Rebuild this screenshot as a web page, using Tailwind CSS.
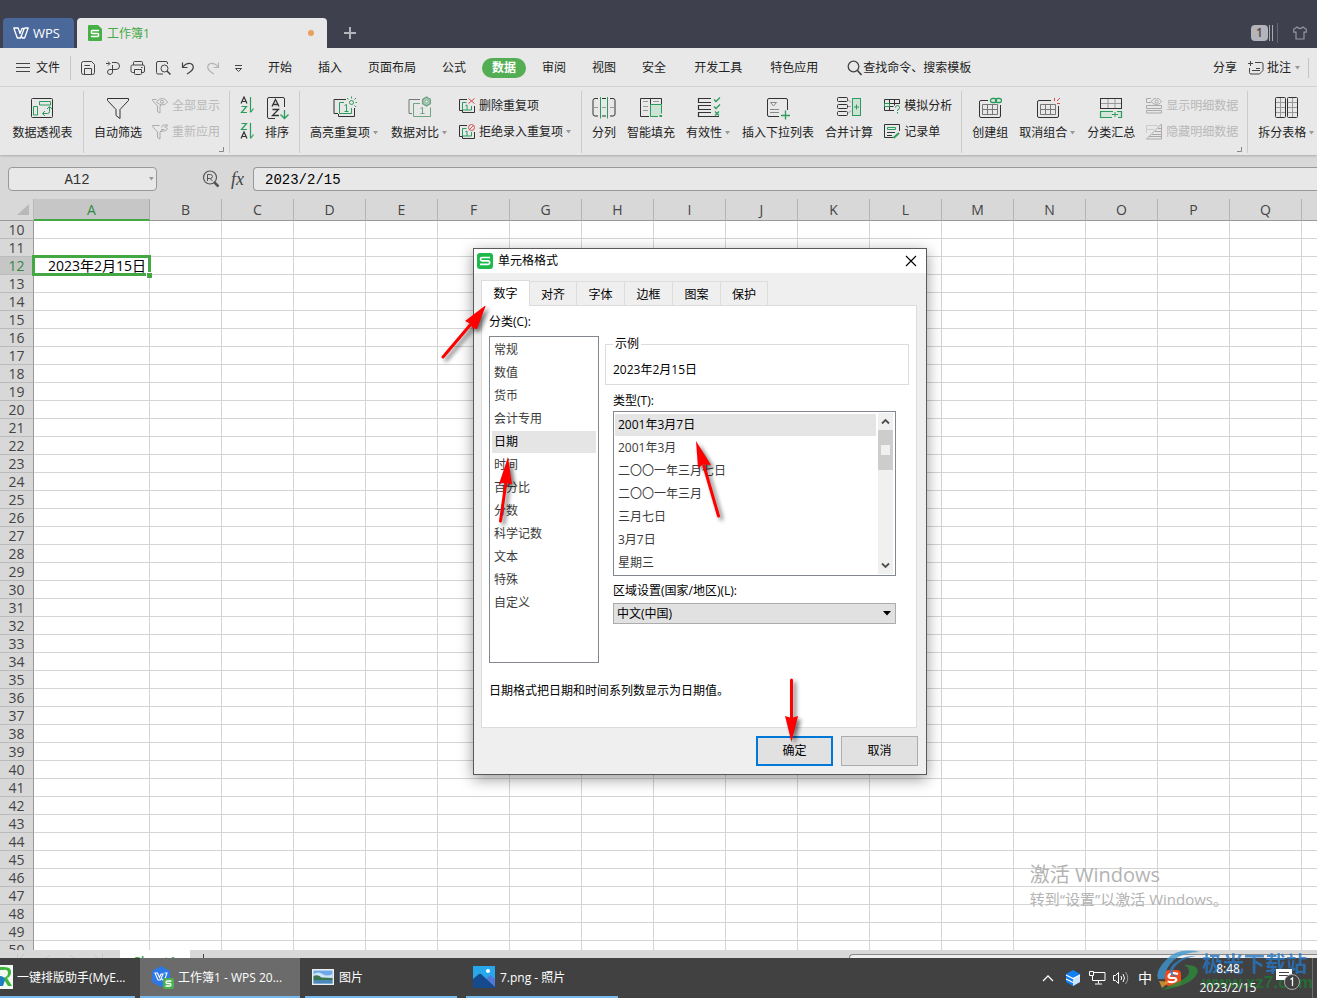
<!DOCTYPE html>
<html lang="zh-CN">
<head>
<meta charset="utf-8">
<meta name="viewport" content="width=device-width, initial-scale=1">
<title>工作簿1 - WPS</title>
<script src="https://cdn.jsdelivr.net/npm/@tailwindcss/browser@4"></script>
</head>
<body class="relative flex h-screen flex-col overflow-hidden bg-[#d8d8d8] font-['Open_Sans','Noto_Sans_CJK_SC',sans-serif] text-xs leading-4 text-[#222]">

<!-- Title bar -->
<header class="flex h-12 shrink-0 items-end bg-[#3e414d] pl-[3px]">
  <button class="flex h-[30px] w-[71px] items-center gap-1 rounded-t bg-[#4a6899] pl-[10px] text-[13px] text-white">
    <svg width="16" height="12" viewBox="0 0 16 12" fill="none" stroke="#fff" stroke-width="1.300" stroke-linejoin="round"><path d="M.8 1h4.400l1.800 5.500L9 1.500h2.200L7.500 11H4.300zM11.500 1h3.700l-3.600 10H9.200L8 8"/></svg>
    <span>WPS</span>
  </button>
  <div class="ml-[3px] flex h-[30px] w-[250px] items-center rounded-t bg-[#e8e8e8] pl-[11px]">
    <svg width="14" height="16" viewBox="0 0 14 16"><path d="M1 0h9l4 4v11a1 1 0 0 1-1 1H1a1 1 0 0 1-1-1V1a1 1 0 0 1 1-1z" fill="#45b045"/><path d="M11 5.500H4.500Q3.300 5.500 3.300 7T4.500 8.500h5q1.200 0 1.200 1.500t-1.200 1.500H3" fill="none" stroke="#fff" stroke-width="1.500"/></svg>
    <span class="ml-[5px] grow pt-px text-[#45a945]">工作簿1</span>
    <span class="mr-[13px] h-[6px] w-[6px] rounded-full bg-[#e8a05c]"></span>
  </div>
  <button class="flex h-[30px] w-[46px] items-center justify-center" aria-label="新建标签"><svg width="12" height="12" viewBox="0 0 12 12" stroke="#b4b5ba" stroke-width="2"><path d="M6 0v12M0 6h12"/></svg></button>
  <div class="ml-auto flex h-[30px] items-center pr-[10px]">
    <span class="flex h-4 w-[17px] items-center justify-center rounded-sm bg-[#b4b5bb] text-xs font-semibold text-[#5d4a3a]">1</span>
    <svg class="ml-px" width="10" height="20" viewBox="0 0 10 20" stroke="#a9abb2"><path d="M0.500 2v16M3.500 2v16"/><path d="M8.500 0v20" stroke="#63666f"/></svg>
    <svg class="ml-[14px]" width="14" height="14" viewBox="0 0 14 14" fill="none" stroke="#9496a0" stroke-width="1.200"><path d="M4 1Q7 4 10 1l3.300 2.200v3H11V13H3V6.200H.7v-3z"/></svg>
  </div>
</header>

<!-- Menu bar -->
<nav class="flex h-[39px] shrink-0 items-center border-b border-[#d6d6d6] bg-[#e8e8e8] pt-px pl-4">
  <button class="flex items-center gap-[5px]"><svg width="15" height="11" viewBox="0 0 15 11" stroke="#444"><path d="M0 1.500h14M0 5.500h14M0 9.500h14"/></svg><span>文件</span></button>
  <div class="ml-[10px] h-6 w-px bg-[#c4c4c4]"></div>
  <div class="ml-[9px] flex items-center gap-[9px]">
    <button aria-label="保存"><svg width="16" height="16" viewBox="0 0 16 16" fill="none" stroke="#444"><path d="M1.500 3.500a2 2 0 0 1 2-2h8l3 3v8a2 2 0 0 1-2 2h-9a2 2 0 0 1-2-2zM4.500 14.500v-6h7v6M4.500 5.500h5.500"/></svg></button>
    <button aria-label="输出"><svg width="16" height="16" viewBox="0 0 16 16" fill="none" stroke="#444"><path d="M1 3.500h3.500M3 1.500l2 2-2 2M7 2.500h4a3.500 3.500 0 0 1 0 7H5M7.500 5v7a2.500 2.500 0 1 1-2.500-2.500"/></svg></button>
    <button aria-label="打印"><svg width="16" height="16" viewBox="0 0 16 16" fill="none" stroke="#444"><path d="M3.500 5V2.500q0-1 1-1h7q1 0 1 1V5M4 12.500H2.500q-1.500 0-1.500-1.500V6.500q0-1.500 1.500-1.500h10.500q1.500 0 1.500 1.500V11q0 1.500-1.500 1.500h-1M4.500 9.500h7v4q0 1-1 1h-5q-1 0-1-1zM11 7.500h1.500"/></svg></button>
    <button aria-label="打印预览"><svg width="16" height="16" viewBox="0 0 16 16" fill="none" stroke="#444"><path d="M12.500 4V3q0-1.500-1.500-1.500H3Q1.500 1.500 1.500 3v9.500q0 1.500 1.500 1.500h5"/><circle cx="9.500" cy="8.500" r="3.500"/><path d="M12 11l3.500 3.500" stroke-width="1.500"/></svg></button>
    <button aria-label="撤销"><svg width="16" height="16" viewBox="0 0 16 16" fill="none" stroke="#444" stroke-width="1.200"><path d="M2.500 2.500v5h5M2.800 7Q6 3 9.500 3.300q3.500.4 3.800 3.700 0 3-3.300 5L7 14"/></svg></button>
    <button aria-label="恢复"><svg width="16" height="16" viewBox="0 0 16 16" fill="none" stroke="#b4b4b4" stroke-width="1.200"><path d="M13.500 2.500v5h-5M13.200 7Q10 3 6.500 3.300 3 3.700 2.700 7q0 3 3.300 5L9 14"/></svg></button>
    <button class="pl-px" aria-label="更多"><svg width="16" height="16" viewBox="0 0 16 16" fill="none" stroke="#444"><path d="M4 5.500h7M4.500 8.500h6L7.500 11.500z"/></svg></button>
  </div>
  <div class="ml-2 flex items-center whitespace-nowrap">
    <button class="px-[13px]">开始</button>
    <button class="px-[13px]">插入</button>
    <button class="px-[13px]">页面布局</button>
    <button class="pr-[10px] pl-[13px]">公式</button>
    <button class="mx-[6px] h-5 w-11 rounded-full bg-[#53ae53] font-bold text-white">数据</button>
    <button class="pr-[13px] pl-[10px]">审阅</button>
    <button class="px-[13px]">视图</button>
    <button class="pr-[14px] pl-[13px]">安全</button>
    <button class="px-[14px]">开发工具</button>
    <button class="px-[14px]">特色应用</button>
  </div>
  <button class="ml-[15px] flex items-center whitespace-nowrap"><svg width="16" height="16" viewBox="0 0 16 16" fill="none" stroke="#444" stroke-width="1.300"><circle cx="6.500" cy="6.500" r="5.300"/><path d="M10.500 10.500l4 4.500" stroke-width="1.700"/></svg><span>查找命令、搜索模板</span></button>
  <button class="ml-auto whitespace-nowrap">分享</button>
  <button class="ml-[11px] flex items-center gap-[3px] whitespace-nowrap">
    <svg width="16" height="16" viewBox="0 0 16 16" fill="none" stroke="#444"><path d="M0 3.500h5M2.500 1v5M7 2.500h6.500q1.500 0 1.500 1.500v6.500L11.500 14H3q-1.500 0-1.500-1.500V8M8 8.500h4M4 10.500h8"/></svg>
    <span>批注</span><svg width="7" height="4" viewBox="0 0 7 4" fill="#999"><path d="M1 0h5L3.500 3.500z"/></svg>
  </button>
  <div class="mr-2 ml-[7px] h-5 w-px bg-[#c4c4c4]"></div>
</nav>

<!-- Ribbon -->
<section class="flex h-[68px] shrink-0 items-start overflow-hidden bg-[#e8e8e8] pt-1 whitespace-nowrap shadow-[0_1px_2px_#aaa]" aria-label="数据">
  <div class="flex h-[62px] w-[84px] shrink-0 justify-center border-r border-[#ccc] pl-[2px]">
    <button class="flex h-[50px] flex-col items-center gap-[5px] pt-[5px]">
      <svg width="24" height="24" viewBox="0 0 24 24" fill="none" stroke="#333"><rect x="1.500" y="2.500" width="21" height="19" rx="1"/><g stroke="#2a9d5a"><path d="M9.500 5.500h11v3.500h-11zM3.500 10.500h4v8.500h-4zM19.500 11v4.500q0 2-2 2h-5M17 13l2.500-2.500 2.500 2.500M15 15l-2.500 2.500L15 20"/></g></svg>
      <span>数据透视表</span>
    </button>
  </div>
  <div class="relative flex h-[62px] w-[146px] shrink-0 border-r border-[#ccc] pl-[10px]">
    <button class="flex h-[50px] flex-col items-center gap-[5px] pt-[5px]">
      <svg width="24" height="24" viewBox="0 0 24 24" fill="none" stroke="#333"><path d="M1.500 2.500h21v2l-8.500 9v9l-4-3v-6l-8.500-9z"/></svg>
      <span>自动筛选</span>
    </button>
    <div class="ml-[10px] flex flex-col gap-[10px] pt-[7px] text-[#b8b8b8]">
      <button class="flex items-center gap-1"><svg width="16" height="16" viewBox="0 0 16 16" fill="none" stroke="#aaa"><path d="M4.500 1.500h-4v1L5.500 8v5.500l2.500 1.500V8l1-1M4.500 4q3-4 6-3.500 3 0 5 3.500-2 3-5 3t-6-3z"/><circle cx="10" cy="3.800" r="1.500"/></svg><span>全部显示</span></button>
      <button class="flex items-center gap-1"><svg width="16" height="16" viewBox="0 0 16 16" fill="none" stroke="#aaa"><path d="M7.500 1.500h-7v1L5.500 8v5.500l2.500 1.500V8l1-1M9.500 3.500q1-3 3-2.500h2M15 0v3h-3M15.500 4q-1 3-3 3h-2.500M9.500 8V5.500h3"/></svg><span>重新应用</span></button>
    </div>
    <svg class="absolute right-[5px] bottom-px" width="5" height="5" viewBox="0 0 5 5" fill="none" stroke="#888"><path d="M4.500 0v4.500H0"/></svg>
  </div>
  <div class="flex h-[62px] w-[70px] shrink-0 border-r border-[#ccc] pl-[10px]">
    <div class="flex flex-col gap-[8px] pt-[5px]">
      <button aria-label="升序"><svg width="14" height="18" viewBox="0 0 14 18" fill="none" stroke="#333" stroke-width="1.200"><path d="M1 7.500L4 1l3 6.500M2 5.500h4"/><path d="M1.500 10.500h5L1.500 16.500H7M10.500 1v15M13.500 12.500L10.500 16.500" stroke="#2a9d5a"/></svg></button>
      <button aria-label="降序"><svg width="14" height="18" viewBox="0 0 14 18" fill="none" stroke="#333" stroke-width="1.200"><path d="M1 16.500L4 10l3 6.500M2 14.500h4"/><path d="M1.500 1.500h5L1.500 7.500H7M10.500 1v15M13.500 12.500L10.500 16.500" stroke="#2a9d5a"/></svg></button>
    </div>
    <button class="ml-[11px] flex h-[50px] flex-col items-center gap-[5px] pt-[5px]">
      <svg width="24" height="24" viewBox="0 0 24 24" fill="none" stroke="#333"><path d="M10 22.500H4q-1.500 0-1.500-1.500V3Q2.500 1.500 4 1.500h14q1.500 0 1.500 1.500v8"/><path d="M7 10.500l3.500-7 3.500 7M8.500 8.500h4.500M7.500 13.500h6l-6 6H14" stroke-width="1.300"/><path d="M19.500 14v8.500M15.500 18.500l4 4 4-4" stroke="#2a9d5a" stroke-width="1.300"/></svg>
      <span>排序</span>
    </button>
  </div>
  <div class="flex h-[62px] shrink-0 gap-3 border-r border-[#ccc] pr-2 pl-[10px]">
    <button class="flex h-[50px] flex-col items-center gap-[5px] pt-[5px]">
      <svg width="24" height="24" viewBox="0 0 24 24" fill="none" stroke="#333"><path d="M13 3.500H1v14h4M21.500 12v8.500H5.500V18"/><path d="M11 6.500H6.500v11h12V12M11.500 9.500l2-1v7M11.500 15.500h4" stroke="#2a9d5a"/><g stroke="#2a9d5a"><circle cx="18.500" cy="6.500" r="2"/><path d="M18.500 .5v2M14 2l1.500 1.500M23 2l-1.500 1.500M22.500 6.500H25M21.500 9.500l1.500 1.500"/></g></svg>
      <span class="flex items-center gap-[2px]">高亮重复项<svg width="7" height="4" viewBox="0 0 7 4" fill="#999"><path d="M1 0h5L3.500 3.500z"/></svg></span>
    </button>
    <button class="flex h-[50px] flex-col items-center gap-[5px] pt-[5px]">
      <svg width="24" height="24" viewBox="0 0 24 24" fill="none" stroke="#777"><path d="M12 3.500H1v14h3"/><path d="M12 7.500H5.500v13h17v-9M12.500 12.500l2-1v6M12.500 17.500h4" stroke="#6fa583"/><path d="M18.500 1.200l3.800 2.200v4.200l-3.800 2.200-3.800-2.200V3.400z" fill="#b7d0c0" stroke="#6fa583" stroke-width="1.500"/><circle cx="18.500" cy="5.500" r="1.500" fill="#fff" stroke="#6fa583"/></svg>
      <span class="flex items-center gap-[2px]">数据对比<svg width="7" height="4" viewBox="0 0 7 4" fill="#999"><path d="M1 0h5L3.500 3.500z"/></svg></span>
    </button>
    <div class="-ml-px flex flex-col items-start gap-[10px] pt-[7px] pr-px">
      <button class="flex items-center gap-1"><svg width="16" height="16" viewBox="0 0 16 16" fill="none" stroke="#333"><path d="M8 1.500H.5v11H3M15.500 8v6.500h-12V12"/><path d="M7.500 4.500h-4v7.500h9V8M6.500 7.500l1.500-.5V12" stroke="#2a9d5a"/><path d="M9.500 .5l6 5M15.500 .5l-6 5" stroke="#d0514f"/></svg><span>删除重复项</span></button>
      <button class="flex items-center gap-1"><svg width="16" height="16" viewBox="0 0 16 16" fill="none" stroke="#333"><path d="M8 1.500H.5v11H3M15.500 8v6.500h-12V12"/><path d="M7.500 4.500h-4v7.500h9V8M6.500 7.500l1.500-.5V12" stroke="#2a9d5a"/><g stroke="#d0514f"><circle cx="12.500" cy="3.500" r="3"/><path d="M10.500 5.500l4-4"/></g></svg><span class="flex items-center gap-[2px]">拒绝录入重复项<svg width="7" height="4" viewBox="0 0 7 4" fill="#999"><path d="M1 0h5L3.500 3.500z"/></svg></span></button>
    </div>
  </div>
  <div class="flex h-[62px] shrink-0 gap-[11px] border-r border-[#ccc] pr-[9px] pl-[10px]">
    <button class="flex h-[50px] flex-col items-center gap-[5px] pt-[5px]">
      <svg width="24" height="24" viewBox="0 0 24 24" fill="none" stroke="#333"><path d="M6 2.500H3q-2 0-2 2V18q0 2 2 2h3M10 2.500h4M10 20h4M18 2.500h3q2 0 2 2V18q0 2-2 2h-3"/><path d="M1 11.500h5M10 11.500h4M18 11.500h5" stroke="#999"/><path d="M8.500 1v21.500M15.500 1v21.500" stroke="#2a9d5a"/></svg>
      <span>分列</span>
    </button>
    <button class="flex h-[50px] flex-col items-center gap-[5px] pt-[5px]">
      <svg width="24" height="24" viewBox="0 0 24 24" fill="none" stroke="#333"><path d="M10 20.500H1.500v-18h21V8M11.500 2.500v18"/><path d="M4 5.500h5M4 10.500h5M4 14.500h5M14 5.500h6" stroke="#999"/><path d="M19 20.500h-7.500v-12h11v9" fill="#cfe2d6" stroke="#2a9d5a"/><path d="M20.500 20h2.500" stroke="#2a9d5a" stroke-width="2"/></svg>
      <span>智能填充</span>
    </button>
    <button class="flex h-[50px] flex-col items-center gap-[5px] pt-[5px]">
      <svg width="24" height="24" viewBox="0 0 24 24" fill="none" stroke="#333"><path d="M14 2.500H1.500v4H14M14 9.500H1.500v4H14M14 16.500H1.500v4H22" stroke-width="1.200"/><path d="M17 3.500l2 2 4-4M17 10.500l2 2 4-4M18 15.500l4 4M22 15.500l-4 4" stroke="#2a9d5a" stroke-width="1.300"/></svg>
      <span class="flex items-center gap-[2px]">有效性<svg width="7" height="4" viewBox="0 0 7 4" fill="#999"><path d="M1 0h5L3.500 3.500z"/></svg></span>
    </button>
    <button class="flex h-[50px] flex-col items-center gap-[5px] pt-[5px]">
      <svg width="24" height="24" viewBox="0 0 24 24" fill="none" stroke="#333"><path d="M13 20.500H3q-1.500 0-1.500-1.500V4Q1.500 2.500 3 2.500h17q1.500 0 1.500 1.500v10"/><path d="M4.500 6.500h6L7.500 10zM4 13.500h9M4 16.500h9" stroke="#888"/><path d="M19.500 14.500v9M15 19.500h9" stroke="#2a9d5a" stroke-width="1.300"/></svg>
      <span>插入下拉列表</span>
    </button>
    <button class="flex h-[50px] flex-col items-center gap-[5px] pt-[5px]">
      <svg width="24" height="24" viewBox="0 0 24 24" fill="none" stroke="#333"><rect x=".5" y="1.500" width="10" height="4" rx="1"/><rect x=".5" y="8.500" width="10" height="4" rx="1"/><rect x=".5" y="15.500" width="10" height="4" rx="1"/><path d="M11 3.500l3 3M11 10.500h3M11 17.500l3-3" stroke="#999"/><rect x="15.500" y="2.500" width="8" height="17" fill="#cfe2d6" stroke="#2a9d5a"/><path d="M19.500 8.500v5M17 11h5" stroke="#2a9d5a"/></svg>
      <span>合并计算</span>
    </button>
    <div class="flex flex-col items-start gap-[10px] pt-[7px]">
      <button class="flex items-center gap-1"><svg width="16" height="16" viewBox="0 0 16 16" fill="none" stroke="#333"><path d="M10 12.500H.5v-11h15V6M.5 5.500h15M.5 8.500h9M5.500 1.500v11M10.500 1.500v6"/><path d="M.5 5.500h5v3h-5zM11.500 9.500q0-2 2-2t2 2-2 2.500v1M13.500 14v1.500" stroke="#2a9d5a"/></svg><span>模拟分析</span></button>
      <button class="flex items-center gap-1"><svg width="16" height="16" viewBox="0 0 16 16" fill="none" stroke="#333"><path d="M9 13.500H.5v-13h15V7M3 8.500h8M3 11.500h5"/><path d="M3.500 3.500h8v2h-8z" stroke="#2a9d5a"/><path d="M9.500 14l5.500-5" stroke="#2a9d5a" stroke-width="2"/></svg><span>记录单</span></button>
    </div>
  </div>
  <div class="relative flex h-[62px] shrink-0 gap-[11px] border-r border-[#ccc] pr-[9px] pl-[10px]">
    <button class="flex h-[50px] flex-col items-center gap-[5px] pt-[5px]">
      <svg width="24" height="24" viewBox="0 0 24 24" fill="none" stroke="#333"><path d="M10 4.500H3q-1.500 0-1.500 1.500v14q0 1.500 1.500 1.500h18q1.500 0 1.500-1.500V9"/><path d="M4.500 8.500h15v10h-15zM4.500 13.500h15M9.500 8.500v10M14.500 8.500v10" stroke="#777"/><g stroke="#2a9d5a" stroke-width="1.300"><rect x="12.500" y="2.500" width="6" height="4" rx="2"/><rect x="17.500" y="2.500" width="6" height="4" rx="2"/></g></svg>
      <span>创建组</span>
    </button>
    <button class="flex h-[50px] flex-col items-center gap-[5px] pt-[5px]">
      <svg width="24" height="24" viewBox="0 0 24 24" fill="none" stroke="#333"><path d="M15 4.500H3q-1.500 0-1.500 1.500v14q0 1.500 1.500 1.500h18q1.500 0 1.500-1.500V10"/><path d="M4.500 8.500h15v10h-15zM4.500 13.500h15M9.500 8.500v10M14.500 8.500v10" stroke="#777"/><path d="M18.500 2v3M24 2l-3 3M21 7.500h3" stroke="#d0514f"/></svg>
      <span class="flex items-center gap-[2px]">取消组合<svg width="7" height="4" viewBox="0 0 7 4" fill="#999"><path d="M1 0h5L3.500 3.500z"/></svg></span>
    </button>
    <button class="flex h-[50px] flex-col items-center gap-[5px] pt-[5px]">
      <svg width="24" height="24" viewBox="0 0 24 24" fill="none" stroke="#333"><path d="M2 7.500h21M9 2.500v10M16 2.500v10" stroke="#999"/><rect x="1.500" y="2.500" width="21" height="10"/><path d="M13 21.500H1.500v-6H14M18 15.500h4.500v6H19" fill="#d5e5da" stroke="#2a9d5a" stroke-width="1.200"/><path d="M16 16v5M13 18.500h6" stroke="#2a9d5a"/></svg>
      <span>分类汇总</span>
    </button>
    <div class="flex flex-col items-start gap-[10px] pt-[7px] text-[#b8b8b8]">
      <button class="flex items-center gap-1"><svg width="16" height="16" viewBox="0 0 16 16" fill="none" stroke="#aaa"><path d="M5 .5H.5v4H5M.5 7.500h15v3H.5zM.5 12.500h15v2.500H.5zM5 3.500Q8 0 10.500 0q3 .5 5 3.500-2 3-5 3T5 3.500z"/><circle cx="10.500" cy="3.500" r="1.500"/></svg><span>显示明细数据</span></button>
      <button class="flex items-center gap-1"><svg width="16" height="16" viewBox="0 0 16 16" fill="none" stroke="#aaa"><path d="M.5 15L15.500 0v15zM6 10.500h9.500M9 7.500h6.500M12 4.500h3M3 12.500h12"/><path d="M.5 9V1.500H12M.5 5.500H8" stroke="#ccc"/></svg><span>隐藏明细数据</span></button>
    </div>
    <svg class="absolute right-[5px] bottom-px" width="5" height="5" viewBox="0 0 5 5" fill="none" stroke="#888"><path d="M4.500 0v4.500H0"/></svg>
  </div>
  <div class="flex h-[62px] shrink-0 pl-[10px]">
    <button class="flex h-[50px] flex-col items-center gap-[5px] pt-[5px]">
      <svg width="24" height="24" viewBox="0 0 24 24" fill="none" stroke="#777"><path d="M5.500 2v19M17.500 2v19M1 6.500h10M1 11.500h10M1 16.500h10M13 6.500h10M13 11.500h10M13 16.500h10" stroke="#999"/><rect x=".5" y="1.500" width="10" height="20" rx="1" stroke="#333"/><rect x="12.500" y="1.500" width="10" height="20" rx="1" stroke="#333"/></svg>
      <span class="flex items-center gap-[2px]">拆分表格<svg width="7" height="4" viewBox="0 0 7 4" fill="#999"><path d="M1 0h5L3.500 3.500z"/></svg></span>
    </button>
  </div>
</section>

<!-- Name box and formula bar -->
<section class="flex h-11 shrink-0 items-center pt-1 pl-2">
  <div class="flex h-6 w-[149px] items-center rounded-[4px] border border-[#999] bg-[#e8e8e8] pr-[2px]">
    <input aria-label="名称框" value="A12" class="w-full min-w-0 bg-transparent pt-[2px] pr-1 text-center font-['Liberation_Mono',monospace] text-sm text-[#333] outline-none">
    <svg width="5" height="4" viewBox="0 0 5 4" fill="#999"><path d="M0 0h5L2.500 3.500z"/></svg>
  </div>
  <button class="ml-[45px]" aria-label="浏览公式结果"><svg width="18" height="18" viewBox="0 0 18 18" fill="none" stroke="#555"><circle cx="8" cy="7.500" r="6.500" stroke-width="1.200"/><path d="M5.500 11V4.500h3q2 .3 2 2t-2 2h-3M8 8.500l2.500 2.500" /><path d="M12 12l4.500 4.500" stroke-width="2.500"/></svg></button>
  <button class="ml-[9px] w-[17px] font-['Liberation_Serif',serif] text-lg leading-5 text-[#444] italic" aria-label="插入函数">fx</button>
  <input aria-label="编辑栏" value="2023/2/15" class="ml-[7px] h-6 min-w-0 grow rounded-l-[4px] border border-r-0 border-[#999] bg-[#e8e8e8] pt-[2px] pl-[11px] font-['Liberation_Mono',monospace] text-sm text-black outline-none">
</section>

<!-- Worksheet -->
<main class="min-h-0 grow overflow-hidden bg-white">
  <table class="w-[1374px] table-fixed border-separate border-spacing-0 text-sm">
    <colgroup id="cols"><col class="w-[34px]"><col class="w-[116px]"></colgroup>
    <thead><tr id="head" class="h-[22px] bg-[#d8d8d8]"><th class="h-[22px] border-r border-b border-r-[#bbb] border-b-[#999] p-0"><svg class="ml-[17px]" width="13" height="12" viewBox="0 0 13 12" fill="#b8b8b8"><path d="M12 0v11H0z"/></svg></th></tr></thead>
    <tbody id="rows"></tbody>
  </table>
</main>

<!-- Sheet tabs -->
<div class="flex h-2 shrink-0 overflow-hidden bg-[#d8d8d8]">
  <svg class="ml-4" width="90" height="8" viewBox="0 0 90 8" fill="none" stroke="#c6c6c6"><path d="M1.500 4v4M8 4L4 8M34 5l-3 3M54 5l3 3M78 5l4 3M86.500 4v4"/></svg>
  <button class="ml-[14px] h-[22px] w-[70px] bg-white text-[13px] font-semibold text-[#43a843]">Sheet1</button>
  <span class="ml-[13px] mt-1 h-4 w-px bg-[#444]"></span>
  <div class="mt-[4px] ml-auto h-4 w-[468px] rounded-tl border-t border-l border-[#888] bg-[#eee]"></div>
</div>

<!-- Taskbar -->
<footer class="flex h-10 shrink-0 bg-[#414141] text-white">
  <button class="flex h-10 w-[135px] items-center gap-[3px] border-b-2 border-[#76b9ed]">
    <svg width="14" height="24" viewBox="0 0 14 24"><path d="M0 0h13v24H0z" fill="#f2f8f2"/><path d="M0 2h4q8 0 7 6-.5 4-4 5l5 8H8L3 13q5-1 5-5T3 5H0z" fill="#3db53d"/><path d="M0 11q4 0 5 4l-2 6H0z" fill="#1b7fc0"/></svg>
    <span class="pt-[2px] whitespace-nowrap">一键排版助手(MyE...</span>
  </button>
  <button class="ml-[5px] flex h-10 w-[160px] items-center gap-1 border-b-2 border-[#76b9ed] bg-[#6b6b6b] pl-[10px]">
    <svg width="24" height="24" viewBox="0 0 24 24"><path d="M11 1l9 5v11l-9 5-9-5V6z" fill="#2d78e8"/><path d="M5 8h2.500l2 4.500 1.500-3.500h2L10.500 15H8zM14.500 8H17l-2.500 7h-2l-.8-1.500" fill="none" stroke="#fff" stroke-width="1.100"/><rect x="13" y="13" width="11" height="11" rx="2" fill="#4cb050"/><path d="M21.500 16h-4q-1.500 0-1.500 1.200t1.500 1.300h2q1.500 0 1.500 1.200T19.500 21h-4" fill="none" stroke="#fff" stroke-width="1.300"/></svg>
    <span class="pt-[2px] whitespace-nowrap">工作簿1 - WPS 20...</span>
  </button>
  <button class="ml-[5px] flex h-10 w-[152px] items-center gap-[5px] border-b-2 border-[#76b9ed] pl-[7px]">
    <svg width="22" height="16" viewBox="0 0 22 16"><path d="M0 0h22v16H0z" fill="#eee"/><path d="M1.500 1.500h19v13h-19z" fill="#6fa8ea"/><path d="M1.500 5q5-3 9 0t10 0v4h-19z" fill="#cfe4f6"/><path d="M1.500 7q4-2 8 1.500l11 .5v2h-19z" fill="#3c7350"/><path d="M1.500 11h19v3.500h-19z" fill="#4a88b8"/></svg>
    <span class="pt-[2px]">图片</span>
  </button>
  <button class="ml-[9px] flex h-10 w-[152px] items-center gap-[5px] border-b-2 border-[#76b9ed] pl-[7px]">
    <svg width="22" height="22" viewBox="0 0 22 22"><path d="M0 0h22v22H0z" fill="#28a8ea"/><path d="M10 16l7-7 5 4v9H10z" fill="#4f78d8"/><path d="M0 13l6-5q1-.7 2 0l14 13v1H0z" fill="#154a8c"/><circle cx="15" cy="5" r="2" fill="#fff"/></svg>
    <span class="pt-[2px]">7.png - 照片</span>
  </button>
  <div class="ml-auto flex items-center">
    <svg width="12" height="8" viewBox="0 0 12 8" fill="none" stroke="#fff" stroke-width="1.300"><path d="M1 7l5-5 5 5"/></svg>
    <svg class="ml-[11px]" width="16" height="18" viewBox="0 0 16 18"><path d="M8 1l7 4v8l-7 4-7-4V5z" fill="#1280f0"/><path d="M8 9.500V17l7-4V5.500z" fill="#cfe5fb"/><path d="M1 6L8 9.500 15 6M1 10l7 3.500" fill="none" stroke="#fff" stroke-width="1.200"/></svg>
    <svg class="ml-2" width="17" height="16" viewBox="0 0 17 16" fill="none" stroke="#fff"><path d="M5 2.500h11v8H3.500V6M.5 1.500h4v4h-4zM9.500 10.500v3M6 14h7"/></svg>
    <svg class="ml-[7px]" width="16" height="16" viewBox="0 0 16 16" fill="none" stroke="#fff"><path d="M.5 5.500h2l3-3v11l-3-3h-2zM8 6q1.500 2 0 4M10 4q3 4 0 8"/><path d="M12.500 2q4.500 6 0 12" stroke="#999"/></svg>
    <span class="ml-[9px] w-[14px] text-sm">中</span>
    <svg class="ml-[12px]" width="18" height="18" viewBox="0 0 18 18"><rect x="1" y="1" width="16" height="16" rx="4" fill="#ee4a1c"/><path d="M14 5Q8 3 5.500 5.500t1 3.500h4q3 1 1 3t-8 .500" fill="none" stroke="#fff" stroke-width="2.200"/></svg>
    <div class="relative z-10 ml-[12px] w-[68px] text-center leading-[19px]"><div>8:48</div><div>2023/2/15</div></div>
    <svg class="relative z-10 ml-[14px]" width="26" height="26" viewBox="0 0 26 26"><path d="M0 4h16v11h-4v4l-4-4H0z" fill="#fff"/><path d="M3 7.500h10M3 10.500h10" stroke="#414141"/><circle cx="16" cy="17" r="7.500" fill="#414141" stroke="#aaa"/><path d="M14.500 14.500l2-1.500v8" fill="none" stroke="#fff" stroke-width="1.300"/></svg>
    <span class="mr-[4px] ml-[10px] h-10 w-px bg-[#707070]"></span>
  </div>
</footer>

<!-- Activation notice -->
<div class="absolute right-[89px] bottom-[89px] whitespace-nowrap text-[#b3b3b3]">
  <p class="text-xl leading-7">激活 Windows</p>
  <p class="text-[15px] leading-5">转到“设置”以激活 Windows。</p>
</div>

<!-- Format cells dialog -->
<section role="dialog" aria-label="单元格格式" class="absolute top-[248px] left-[473px] flex h-[527px] w-[454px] flex-col border border-[#5a5a5a] bg-[#efefef] text-black shadow-[0_4px_14px_rgba(0,0,0,0.4)]">
  <div class="flex h-6 items-center bg-white pl-[3px]">
    <svg width="16" height="16" viewBox="0 0 16 16"><rect width="16" height="16" rx="3" fill="#1db94a"/><path d="M13 4.500H5Q3.500 4.500 3.500 6T5 7.800h6.200q1.500 0 1.500 1.700t-1.500 1.800H3" fill="none" stroke="#fff" stroke-width="1.700"/></svg>
    <span class="ml-[5px] grow">单元格格式</span>
    <button class="mr-[9px]" aria-label="关闭"><svg width="12" height="12" viewBox="0 0 12 12" stroke="#000" stroke-width="1.100"><path d="M1 1l10 10M11 1L1 11"/></svg></button>
  </div>
  <div class="z-10 mt-[7px] -mb-px ml-[7px] flex items-end" role="tablist">
    <button role="tab" class="h-[26px] w-[49px] border border-b-0 border-[#dcdcdc] bg-white">数字</button>
    <button role="tab" class="h-[25px] w-[47px] border border-l-0 border-[#dcdcdc] pt-[2px]">对齐</button>
    <button role="tab" class="h-[25px] w-12 border border-l-0 border-[#dcdcdc] pt-[2px]">字体</button>
    <button role="tab" class="h-[25px] w-12 border border-l-0 border-[#dcdcdc] pt-[2px]">边框</button>
    <button role="tab" class="h-[25px] w-12 border border-l-0 border-[#dcdcdc] pt-[2px]">图案</button>
    <button role="tab" class="h-[25px] w-[47px] border border-l-0 border-[#dcdcdc] pt-[2px]">保护</button>
  </div>
  <div class="mr-[9px] ml-[7px] flex h-[423px] flex-col border border-[#dcdcdc] bg-white px-[7px] pt-2">
    <div class="flex">
      <div class="w-[110px]">
        <p id="cat">分类(C):</p>
        <ul role="listbox" aria-labelledby="cat" class="mt-[6px] flex h-[327px] flex-col gap-px border border-[#828790] px-[2px] pt-[2px] leading-[22px] text-[#3a3a3a]">
          <li class="pl-[2px]">常规</li><li class="pl-[2px]">数值</li><li class="pl-[2px]">货币</li><li class="pl-[2px]">会计专用</li>
          <li class="bg-[#e5e5e5] pl-[2px] text-black">日期</li>
          <li class="pl-[2px]">时间</li><li class="pl-[2px]">百分比</li><li class="pl-[2px]">分数</li><li class="pl-[2px]">科学记数</li><li class="pl-[2px]">文本</li><li class="pl-[2px]">特殊</li><li class="pl-[2px]">自定义</li>
        </ul>
      </div>
      <div class="ml-[6px] w-[304px] pt-[22px]">
        <fieldset class="h-[49px] border border-[#dcdcdc] pb-2 pl-[7px]"><legend class="px-[2px]">示例</legend><p class="pt-[10px]">2023年2月15日</p></fieldset>
        <div class="mt-[8px] ml-2 w-[283px]">
          <p id="type">类型(T):</p>
          <div class="mt-[2px] flex h-[165px] overflow-hidden border border-[#828790]">
            <ul role="listbox" aria-labelledby="type" class="flex grow flex-col gap-px pt-[2px] pl-px leading-[22px] text-[#3a3a3a]">
              <li class="bg-[#e5e5e5] pl-[3px] text-black">2001年3月7日</li><li class="pl-[3px]">2001年3月</li><li class="pl-[3px]">二〇〇一年三月七日</li><li class="pl-[3px]">二〇〇一年三月</li><li class="pl-[3px]">三月七日</li><li class="pl-[3px]">3月7日</li><li class="pl-[3px]">星期三</li>
            </ul>
            <div class="mt-px mr-[2px] mb-px ml-[2px] flex w-[15px] flex-col items-center bg-[#f0f0f0]">
              <svg class="mt-[5px]" width="9" height="7" viewBox="0 0 9 7" fill="none" stroke="#505050" stroke-width="1.800"><path d="M1 5.500l3.500-3.500L8 5.500"/></svg>
              <div class="mt-[5px] flex h-10 w-full items-center justify-center bg-[#cdcdcd]"><span class="h-[10px] w-[9px] bg-[#f0f0f0]"></span></div>
              <svg class="mt-auto mb-[5px]" width="9" height="7" viewBox="0 0 9 7" fill="none" stroke="#505050" stroke-width="1.800"><path d="M1 1.500L4.500 5 8 1.500"/></svg>
            </div>
          </div>
          <label for="locale" class="mt-[7px] block">区域设置(国家/地区)(L):</label>
          <div class="relative mt-1 flex">
            <select id="locale" class="h-[21px] w-full appearance-none border border-[#acacac] bg-[#e1e1e1] pl-[3px] leading-[19px]"><option>中文(中国)</option></select>
            <svg class="absolute top-2 right-[5px]" width="8" height="5" viewBox="0 0 8 5"><path d="M0 0h8L4 4.500z"/></svg>
          </div>
        </div>
      </div>
    </div>
    <p class="mt-5">日期格式把日期和时间系列数显示为日期值。</p>
  </div>
  <div class="mt-2 mr-2 flex justify-end gap-2">
    <button class="h-[30px] w-[77px] border-2 border-[#0078d7] bg-[#e1e1e1]">确定</button>
    <button class="h-[30px] w-[77px] border border-[#adadad] bg-[#e1e1e1]">取消</button>
  </div>
</section>

<!-- Step arrows -->
<svg class="pointer-events-none absolute top-[290px] left-[430px] drop-shadow-[3px_3px_2px_rgba(0,0,0,0.55)]" width="400" height="470" viewBox="430 290 400 470" fill="#f00" stroke="#f00">
  <g stroke-width="3" stroke-linecap="round"><path d="M443 357L471 324M500.500 521L506 482M718.500 516L704 466M791.500 680v38" fill="none"/></g>
  <g stroke="none"><path d="M486 305l-21 16 5 2.500 3 5 4 .5z"/><path d="M508 457l-9 27 6-1.500 7 2z"/><path d="M696 441l2 27 5-3.500 8 .5z"/><path d="M791.500 742l-6.500-26 6.500 2 6.500-2z"/></g>
</svg>

<!-- Download site mark -->
<div class="pointer-events-none absolute right-[10px] bottom-[5px] flex items-center opacity-80">
  <svg width="46" height="44" viewBox="0 0 46 44"><path d="M44 3Q22-2 10 11-1 22 2 30l7 0Q8 20 18 11 28 3 44 3z" fill="#3f97d0"/><path d="M20 13q8-7 20-6-15 2-22 12-4 7 4 8-8 2-8-5 0-5 6-9z" fill="#2f7fc4"/><path d="M28 16q13-1 14 6-3 14-36 19 8-5 18-9 10-5 9-10 0-4-5-6z" fill="#2c8a3c"/><path d="M3 32l10 1-7 6z" fill="#e0a030"/></svg>
  <div class="w-[105px] whitespace-nowrap">
    <p class="text-[21px] leading-6 font-bold text-[#2676c4]">极光下载站</p>
    <p class="font-['Liberation_Sans',sans-serif] text-[17px] leading-4 font-bold text-[#1f7a30]">www.xz7.com</p>
  </div>
</div>

<script>
const cols = document.getElementById('cols'), head = document.getElementById('head'), rows = document.getElementById('rows');
const letters = 'ABCDEFGHIJKLMNOPQ'.split('').concat('');
letters.forEach((l, i) => {
  if (i) cols.insertAdjacentHTML('beforeend', '<col class="w-[72px]">');
  head.insertAdjacentHTML('beforeend', i === 0
    ? '<th class="border-r border-b-2 border-r-[#aaa] border-b-[#43a843] bg-[#c6c6c6] p-0 leading-[19px] font-normal text-[#2f8a43]">A</th>'
    : '<th class="border-r border-b border-r-[#b4b4b4] border-b-[#999] p-0 leading-[20px] font-normal text-[#444]">' + l + '</th>');
});
for (let r = 10; r <= 50; r++) {
  let h = r === 12
    ? '<th class="h-[18px] border-r border-b border-r-[#999] border-b-[#bbb] bg-[#c6c6c6] p-0 leading-[17px] font-normal text-[#2f8a43]">12</th>'
    : '<th class="h-[18px] border-r border-b border-r-[#999] border-b-[#bbb] bg-[#d8d8d8] p-0 leading-[17px] font-normal text-[#444]">' + r + '</th>';
  letters.forEach((l, i) => {
    h += r === 12 && i === 0
      ? '<td class="relative border-r border-b border-[#d4d4d4] p-0 pr-[3px] text-right font-[\'Liberation_Mono\',\'Noto_Sans_CJK_SC\',monospace] leading-[17px] whitespace-nowrap text-black">2023年2月15日<span class="absolute -inset-[2px] border-3 border-[#43a843]"></span><span class="absolute -right-[3px] -bottom-[4px] h-[6px] w-[6px] border-t border-l border-white bg-[#43a843]"></span></td>'
      : '<td class="border-r border-b border-[#d4d4d4] p-0"></td>';
  });
  rows.insertAdjacentHTML('beforeend', '<tr>' + h + '</tr>');
}
</script>
</body>
</html>
